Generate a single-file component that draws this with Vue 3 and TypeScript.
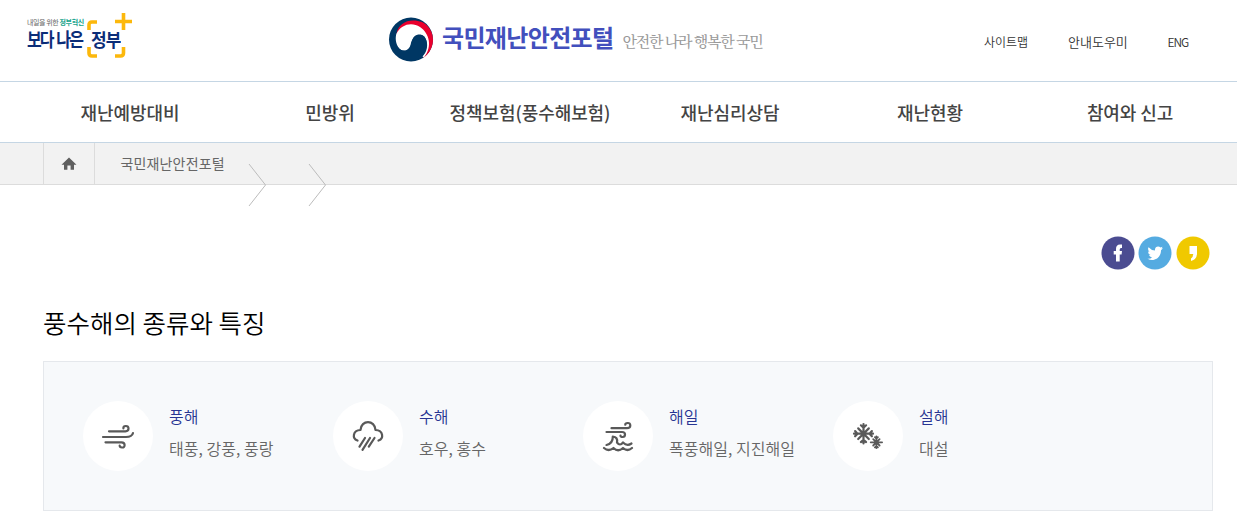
<script setup lang="ts">
interface Hazard {
  id: string
  name: string
  detail: string
}

const menu: string[] = ['재난예방대비', '민방위', '정책보험(풍수해보험)', '재난심리상담', '재난현황', '참여와 신고']

const hazards: Hazard[] = [
  { id: 'wind', name: '풍해', detail: '태풍, 강풍, 풍랑' },
  { id: 'rain', name: '수해', detail: '호우, 홍수' },
  { id: 'wave', name: '해일', detail: '폭풍해일, 지진해일' },
  { id: 'snow', name: '설해', detail: '대설' },
]
</script>

<template>
  <div class="page">
    <header class="header">
      <a class="gov">
        <span class="gov-text">
          <span class="gov-small">내일을 위한 <b>정부혁신</b></span>
          <span class="gov-big">보다 나은</span>
        </span>
        <span class="gov-frame">
          <svg class="gov-svg" width="46" height="46" viewBox="0 0 46 46" fill="none" stroke="#fcb80c" stroke-width="3.600">
            <path d="M10 9H5Q2 9 2 12V17M2 34V40Q2 43 5 43H10M28 43H33.500Q36.500 43 36.500 40V34" />
            <path d="M36.500 0V17M28 8.500H45" />
          </svg>
          <span class="gov-word">정부</span>
        </span>
      </a>
      <a class="brand">
        <svg class="emblem" width="46" height="46" viewBox="0 0 46 46">
          <circle cx="23" cy="23.500" r="22" fill="#003764" />
          <path d="M8.500 18C10 9 17 4.500 25 4.500C32 4.500 37 7 39 9.500C48 18 47 34 35 42C41 34 41 25 36 18L20 12Z" fill="#e9002d" />
          <path d="M8.300 18C13 8 24 5.500 32 11C41 17 45 30 36 41.500L34 40C40 35 41 20 32.500 18.500C22 18 25 29 21 33C18 36 13 35 10.500 31.500C7.500 27 7.300 22 8.300 18Z" fill="#fff" />
          <path d="M10 31C14 37 21 35 22.500 29C24 20.500 29 18.500 33 19C40 20 42 34 34 41C28 46 18 45 13 41Z" fill="#003764" />
        </svg>
        <strong class="brand-name">국민재난안전포털</strong>
        <span class="slogan">안전한 나라 행복한 국민</span>
      </a>
      <nav class="util">
        <a class="u1">사이트맵</a>
        <a class="u2">안내도우미</a>
        <a class="u3">ENG</a>
      </nav>
    </header>

    <nav class="menu">
      <a v-for="m in menu" :key="m">{{ m }}</a>
    </nav>

    <div class="crumbs">
      <a class="home">
        <svg width="16" height="14" viewBox="0 0 16 14"><path d="M8 .5L15.500 7.800H13V12.700H9.600V8.500H6.400V12.700H3V7.800H.5Z" fill="#5f5f5f" /></svg>
      </a>
      <span class="crumb">국민재난안전포털</span>
      <svg class="arrows" width="80" height="44" viewBox="0 0 80 44" fill="none" stroke="#bcbcbc">
        <path d="M1 1L17.500 22L1 43M61 1L77.500 22L61 43" />
      </svg>
    </div>

    <main class="main">
      <div class="share">
        <svg width="34" height="34" viewBox="0 0 34 34">
          <circle cx="17" cy="17" r="16.500" fill="#4b4c91" />
          <path d="M15 25.500V18.500H12.700V15H15V13Q15 8.500 19 8.500H21V12H20Q18.700 12 18.700 13.500V15H21L20.600 18.500H18.700V25.500Z" fill="#fff" />
        </svg>
        <svg width="34" height="34" viewBox="0 0 34 34">
          <circle cx="17" cy="17" r="16.500" fill="#55abe1" />
          <path d="M25 12.300L23 14.200C23.200 21.500 16 26.500 9.500 22.800Q12.500 23 14 21.400Q11.500 21 11 19L12.500 18.900Q10 17.900 10 15.400L11.500 15.800Q9.200 13.500 10.600 11.200Q13.200 14.300 17 14.500C16.300 10.700 20.500 9.200 22.500 11.500L24.600 10.700L23.500 12.600Z" fill="#fff" />
        </svg>
        <svg width="34" height="34" viewBox="0 0 34 34">
          <circle cx="17" cy="17" r="16.500" fill="#f0c900" />
          <path d="M13.500 10H21V18Q20.500 23.500 15 25V22.500Q17.200 21 17.200 18H13.500Z" fill="#fff" />
        </svg>
      </div>
      <h1 class="title">풍수해의 종류와 특징</h1>
      <section class="panel">
        <article v-for="h in hazards" :key="h.id" class="item">
          <div class="disc">
            <svg width="36" height="36" viewBox="0 0 36 36" fill="none" stroke="#595959" stroke-width="2.200" stroke-linecap="round" stroke-linejoin="round">
              <template v-if="h.id === 'wind'">
                <path d="M9 13.300H25.500Q28.500 13.300 28.500 10.600T25.800 8T23.400 10.300" />
                <path d="M3 19H26Q32 19 33 15" />
                <path d="M5.500 24.300H21.500Q24.600 24.300 24.600 27T22 29.500T19.700 27.500" />
              </template>
              <template v-else-if="h.id === 'rain'">
                <path d="M7.500 22.500C2 20.500 2.500 12.500 10.500 12C11 1.500 25 1.500 25.500 12C33.500 12.500 34 20.500 28.500 22.500" />
                <path d="M15 20L9.500 28.700M20 20L12.500 31.800M24.500 20L18.800 28.700" />
              </template>
              <template v-else-if="h.id === 'wave'">
                <path d="M11.500 10.200H27Q30.300 10.200 30.300 7.500T27.600 5T25.300 6.700" />
                <path d="M6.500 14H22Q25 14 25 16.500T22.700 19T20.500 17.500" />
                <path d="M6.500 27Q13 25.500 12.800 18.500Q18 19 17 24.500Q20 28.500 23 24.500Q27 28.500 31.500 25.500" />
                <path d="M4 30Q8.500 34 13.500 30Q18 34.500 23 30Q27.500 34 32 30" />
              </template>
              <template v-else>
                <path d="M13.500 6V25.500M4 15.700H23M8.200 10.400L18.800 21M18.800 10.400L8.200 21M10.900 7.300L13.500 9.700L16.100 7.300M10.900 24.100L13.500 21.700L16.100 24.100M5.100 13.100L7.500 15.700L5.100 18.300M21.900 13.100L19.500 15.700L21.900 18.300" />
                <path d="M26.400 18.500V30M20.700 24.300H32.100M23.200 21.100L29.600 27.500M29.600 21.100L23.200 27.500M24.900 19.200L26.400 20.700L27.900 19.200M24.900 29.400L26.400 27.900L27.900 29.400" stroke-width="1.800" />
              </template>
            </svg>
          </div>
          <div class="copy">
            <h2>{{ h.name }}</h2>
            <p>{{ h.detail }}</p>
          </div>
        </article>
      </section>
    </main>
  </div>
</template>

<style>
body { margin: 0; background: #fff; overflow: hidden; }
</style>

<style scoped>
.page { width: 1237px; height: 512px; overflow: hidden; font-family: "Noto Sans CJK KR", sans-serif; color: #444; }
.page * { box-sizing: border-box; }
.page span, .page a, .page strong { white-space: nowrap; }
.header { display: flex; height: 81px; }
.gov { display: flex; width: 388px; padding: 13px 0 0 27px; color: #0b2d78; }
.gov-text { display: flex; flex-direction: column; width: 60px; padding-top: 4px; }
.gov-small { font-size: 7px; line-height: 10px; letter-spacing: -.4px; color: #666; }
.gov-small b { color: #15a38b; }
.gov-big { font-size: 16px; line-height: 24px; font-weight: 700; letter-spacing: -1.900px; word-spacing: 2px; transform: scaleY(1.2); }
.gov-frame { position: relative; width: 46px; height: 46px; }
.gov-svg { position: absolute; left: 0; top: 0; }
.gov-word { display: block; padding: 13px 0 0 4px; font-size: 17px; line-height: 25px; font-weight: 700; letter-spacing: -1px; transform: scaleY(1.1); }
.brand { display: flex; width: 596px; padding-top: 16px; }
.emblem { display: block; }
.brand-name { margin-left: 8px; font-size: 24px; line-height: 42px; font-weight: 700; letter-spacing: -.65px; color: #424fbd; }
.slogan { margin-left: 9px; font-family: "Noto Serif CJK KR", "Noto Sans CJK KR", serif; font-size: 15px; line-height: 49px; font-weight: 500; letter-spacing: -1.250px; color: #999; }
.util { display: flex; font-size: 12px; line-height: 18px; padding-top: 33px; color: #333; }
.util a { font-weight: 350; }
.u1 { width: 84px; }
.page .u2 { width: 99.500px; font-size: 13px; line-height: 17px; }
.u3 { letter-spacing: -1px; }
.menu { display: grid; grid-template-columns: repeat(6, 200px); height: 62px; padding-left: 30px; border-top: 1px solid #c5d6e4; border-bottom: 1px solid #c5d6e4; }
.menu a { text-align: center; font-size: 18px; line-height: 61px; font-weight: 500; letter-spacing: -.1px; color: #444; }
.crumbs { position: relative; display: flex; height: 42px; padding-left: 43px; background: #f2f2f2; border-bottom: 1px solid #dcdcdc; }
.home { display: flex; align-items: center; justify-content: center; width: 52px; border: solid #dcdcdc; border-width: 0 1px; }
.crumb { margin-left: 25.500px; font-size: 14px; line-height: 40px; letter-spacing: .15px; color: #666; }
.arrows { position: absolute; left: 248px; top: 20px; }
.main { padding: 50px 24px 0 43px; }
.share { display: flex; justify-content: flex-end; gap: 3.500px; height: 36px; padding: 1px 3.500px 0 0; }
.title { margin: 32px 0 0; height: 58px; font-size: 25.500px; line-height: 38px; font-weight: 350; color: #000; }
.panel { display: grid; grid-template-columns: repeat(4, 250px); height: 150px; padding: 39px 0 0 39px; background: #f7f9fb; border: 1px solid #e5e8ec; }
.item { display: flex; }
.disc { display: flex; align-items: center; justify-content: center; width: 70px; height: 70px; border-radius: 50%; background: #fff; }
.copy { padding-left: 16px; margin-top: -1px; }
.copy h2, .copy p { margin: 0; font-size: 16px; line-height: 32px; font-weight: 350; letter-spacing: .05px; white-space: nowrap; }
.copy h2 { color: #283593; }
.copy p { color: #666; }
</style>
